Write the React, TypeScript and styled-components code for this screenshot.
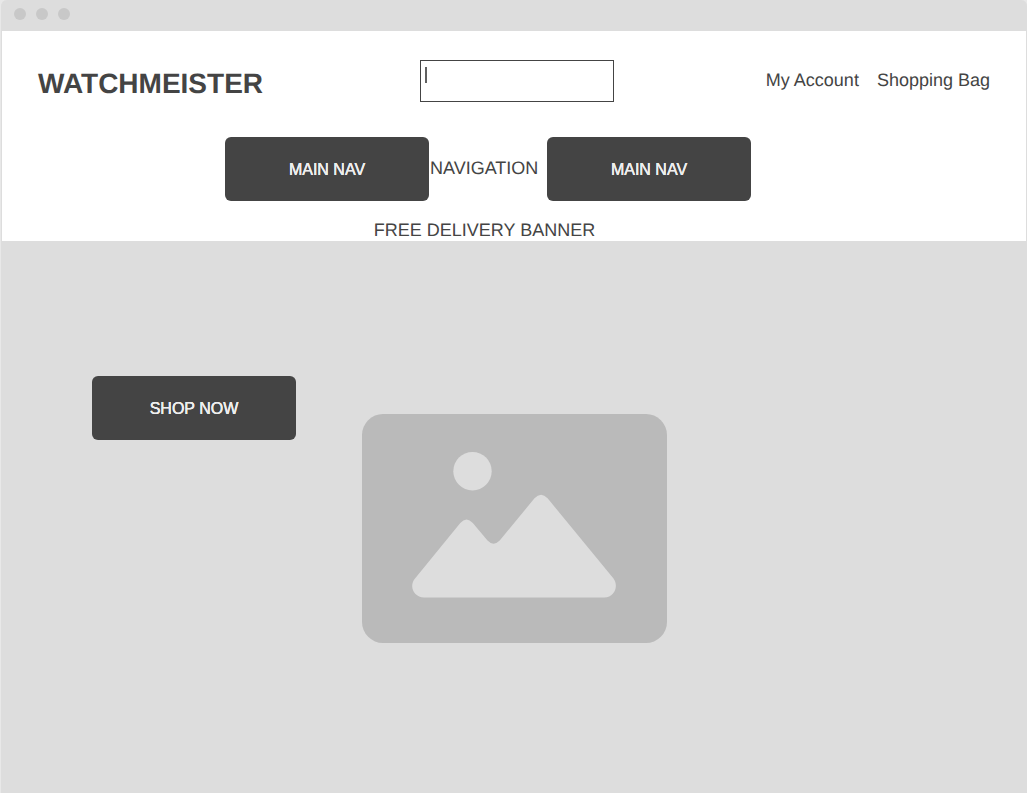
import React from "react";
import styled, { createGlobalStyle } from "styled-components";

const GlobalStyle = createGlobalStyle`
  *, *::before, *::after { box-sizing: border-box; }
  body {
    margin: 0;
    background: #e8e8e8;
    color: #444;
    font-family: "Liberation Sans", Arial, Helvetica, sans-serif;
    font-size: 18px;
    line-height: 20px;
    text-rendering: geometricPrecision;
  }
`;

const Frame = styled.div`
  display: flex;
  flex-direction: column;
  min-height: 100vh;
  margin-left: 1px;
  border: solid #ddd;
  border-width: 0 1px;
  border-radius: 6px 6px 0 0;
  background: #ddd;
`;

const TitleBar = styled.div`
  display: flex;
  gap: 10px;
  height: 31px;
  padding: 8px 12px;
`;

const Dot = styled.span`
  width: 12px;
  height: 12px;
  border-radius: 50%;
  background: #c8c8c8;
`;

const Header = styled.header`
  background: #fff;
  padding-top: 29px;
`;

const TopRow = styled.div`
  display: grid;
  grid-template-columns: 382fr 194px 376fr;
  align-items: start;
  padding: 0 36px;
`;

const Brand = styled.h1`
  margin: 8px 0 0;
  font-size: 28px;
  line-height: 32px;
`;

const SearchField = styled.label`
  position: relative;
  display: block;
`;

const SearchInput = styled.input`
  display: block;
  width: 100%;
  height: 42px;
  padding: 0 8px;
  border: 1px solid #444;
  border-radius: 0;
  background: #fff;
  color: #444;
  font: inherit;
  outline: none;
`;

const Caret = styled.span`
  position: absolute;
  top: 7px;
  left: 5px;
  width: 2px;
  height: 16px;
  background: #606060;
`;

const AccountLinks = styled.nav`
  display: flex;
  justify-content: flex-end;
  gap: 18px;
  padding-top: 10px;
`;

const TextLink = styled.a`
  color: inherit;
  text-decoration: none;
  white-space: nowrap;
`;

const NavRow = styled.nav`
  display: flex;
  justify-content: center;
  align-items: center;
  padding: 35px 52px 0 0;
`;

const NavLabel = styled.span`
  width: 118px;
  padding: 0 0 2px 1px;
`;

const Button = styled.button`
  width: 204px;
  height: 64px;
  padding: 2px 0 0;
  border: 0;
  border-radius: 6px;
  background: #444;
  color: #eee;
  font: inherit;
  font-size: 16px;
  text-shadow: 0 0 0 #eee, 0 0 0 #eee;
  cursor: pointer;
`;

const Banner = styled.p`
  margin: 0;
  padding: 19px 59px 1px 0;
  text-align: center;
`;

const Hero = styled.main`
  flex: 1;
  display: grid;
  grid-template-columns: 360fr 305px 359fr;
  align-items: start;
`;

const HeroAction = styled.div`
  padding: 135px 0 0 90px;
`;

const Placeholder = styled.svg`
  display: block;
  width: 305px;
  height: 229px;
  margin-top: 173px;
`;

export default function App() {
  return (
    <>
      <GlobalStyle />
      <Frame>
        <TitleBar>
          <Dot />
          <Dot />
          <Dot />
        </TitleBar>
        <Header>
          <TopRow>
            <Brand>WATCHMEISTER</Brand>
            <SearchField>
              <SearchInput type="text" aria-label="Search" />
              <Caret />
            </SearchField>
            <AccountLinks>
              <TextLink href="#account">My Account</TextLink>
              <TextLink href="#bag">Shopping Bag</TextLink>
            </AccountLinks>
          </TopRow>
          <NavRow>
            <Button type="button">MAIN NAV</Button>
            <NavLabel>NAVIGATION</NavLabel>
            <Button type="button">MAIN NAV</Button>
          </NavRow>
          <Banner>FREE DELIVERY BANNER</Banner>
        </Header>
        <Hero>
          <HeroAction>
            <Button type="button">SHOP NOW</Button>
          </HeroAction>
          <Placeholder viewBox="0 0 305 229" aria-hidden="true">
            <rect width="305" height="229" rx="21" fill="#bababa" />
            <circle cx="110.5" cy="57.2" r="19.2" fill="#ddd" />
            <path
              fill="#ddd"
              d="M53 164.500 L98.300 109 Q104.500 101.800 110.800 109 L125.500 126.500 Q131.500 132.800 137.700 126.500 L172.500 84.300 Q179 77 185.600 84.300 L251.500 164.500 C257 172 252.500 183.500 242.500 183.500 L62 183.500 C52 183.500 46.500 172.500 53 164.500 Z"
            />
          </Placeholder>
        </Hero>
      </Frame>
    </>
  );
}
